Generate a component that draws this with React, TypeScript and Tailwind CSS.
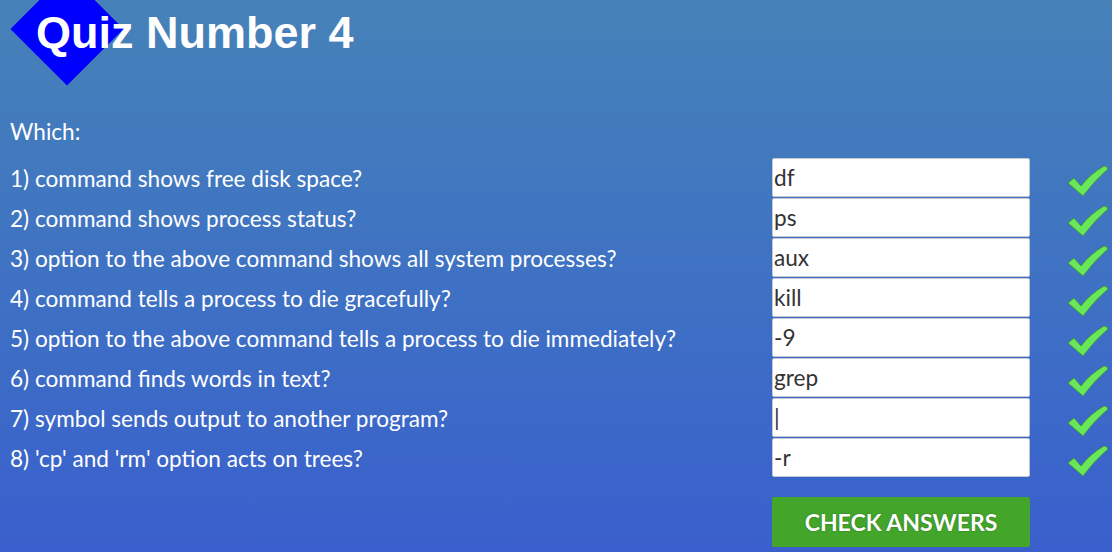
const rows = [
  { q: "1) command shows free disk space?", a: "df" },
  { q: "2) command shows process status?", a: "ps" },
  { q: "3) option to the above command shows all system processes?", a: "aux" },
  { q: "4) command tells a process to die gracefully?", a: "kill" },
  { q: "5) option to the above command tells a process to die immediately?", a: "-9" },
  { q: "6) command finds words in text?", a: "grep" },
  { q: "7) symbol sends output to another program?", a: "|" },
  { q: "8) 'cp' and 'rm' option acts on trees?", a: "-r" },
];

function Check() {
  return (
    <svg width="42" height="32" viewBox="0 0 42 32" className="block">
      <path
        d="M1 18 L7 13 L14 21 Q23 9 37 1 Q40 1 41 4 Q28 15 16 31 Z"
        fill="#68e858"
        stroke="#3f8f36"
        strokeWidth="0.8"
        strokeLinejoin="round"
      />
    </svg>
  );
}

export default function App() {
  return (
    <div
      className="h-[552px] w-[1112px] overflow-hidden bg-gradient-to-b from-[#4682b8] to-[#3a5fcd] text-white"
      style={{ fontFamily: "Lato, 'Open Sans', sans-serif" }}
    >
      <header className="relative h-[100px]">
        <div className="absolute left-[27px] top-[-11px] h-[80px] w-[80px] rotate-45 bg-[#0000ff]" />
        <h1
          className="relative pl-[36px] pt-[5px] text-[45px] font-bold leading-[56px]"
          style={{ fontFamily: "'Liberation Sans', Arial, sans-serif" }}
        >
          Quiz Number 4
        </h1>
      </header>

      <p className="pl-[10px] pt-[17px] text-[22.6px] leading-[30px]">Which:</p>

      <div className="mt-[11px] flex flex-col">
        {rows.map((r) => (
          <div key={r.q} className="flex h-[40px] items-start pl-[10px]">
            <span className="flex-1 pt-[6px] text-[22.6px] leading-[30px]">{r.q}</span>
            <div className="flex h-[39px] w-[258px] items-center rounded-[2px] border border-[#c3c8d2] bg-white pl-[1px] text-[22.6px] text-[#333]">
              {r.a}
            </div>
            <div className="flex w-[82px] justify-end pr-[3px] pt-[7px]">
              <Check />
            </div>
          </div>
        ))}
      </div>

      <div className="mt-[19px] flex pl-[772px]">
        <button className="h-[50px] w-[258px] rounded-[2px] bg-[#43a62b] text-[23px] font-bold text-white [text-shadow:0_0_2px_rgba(0,0,0,0.35)]">
          CHECK ANSWERS
        </button>
      </div>
    </div>
  );
}
